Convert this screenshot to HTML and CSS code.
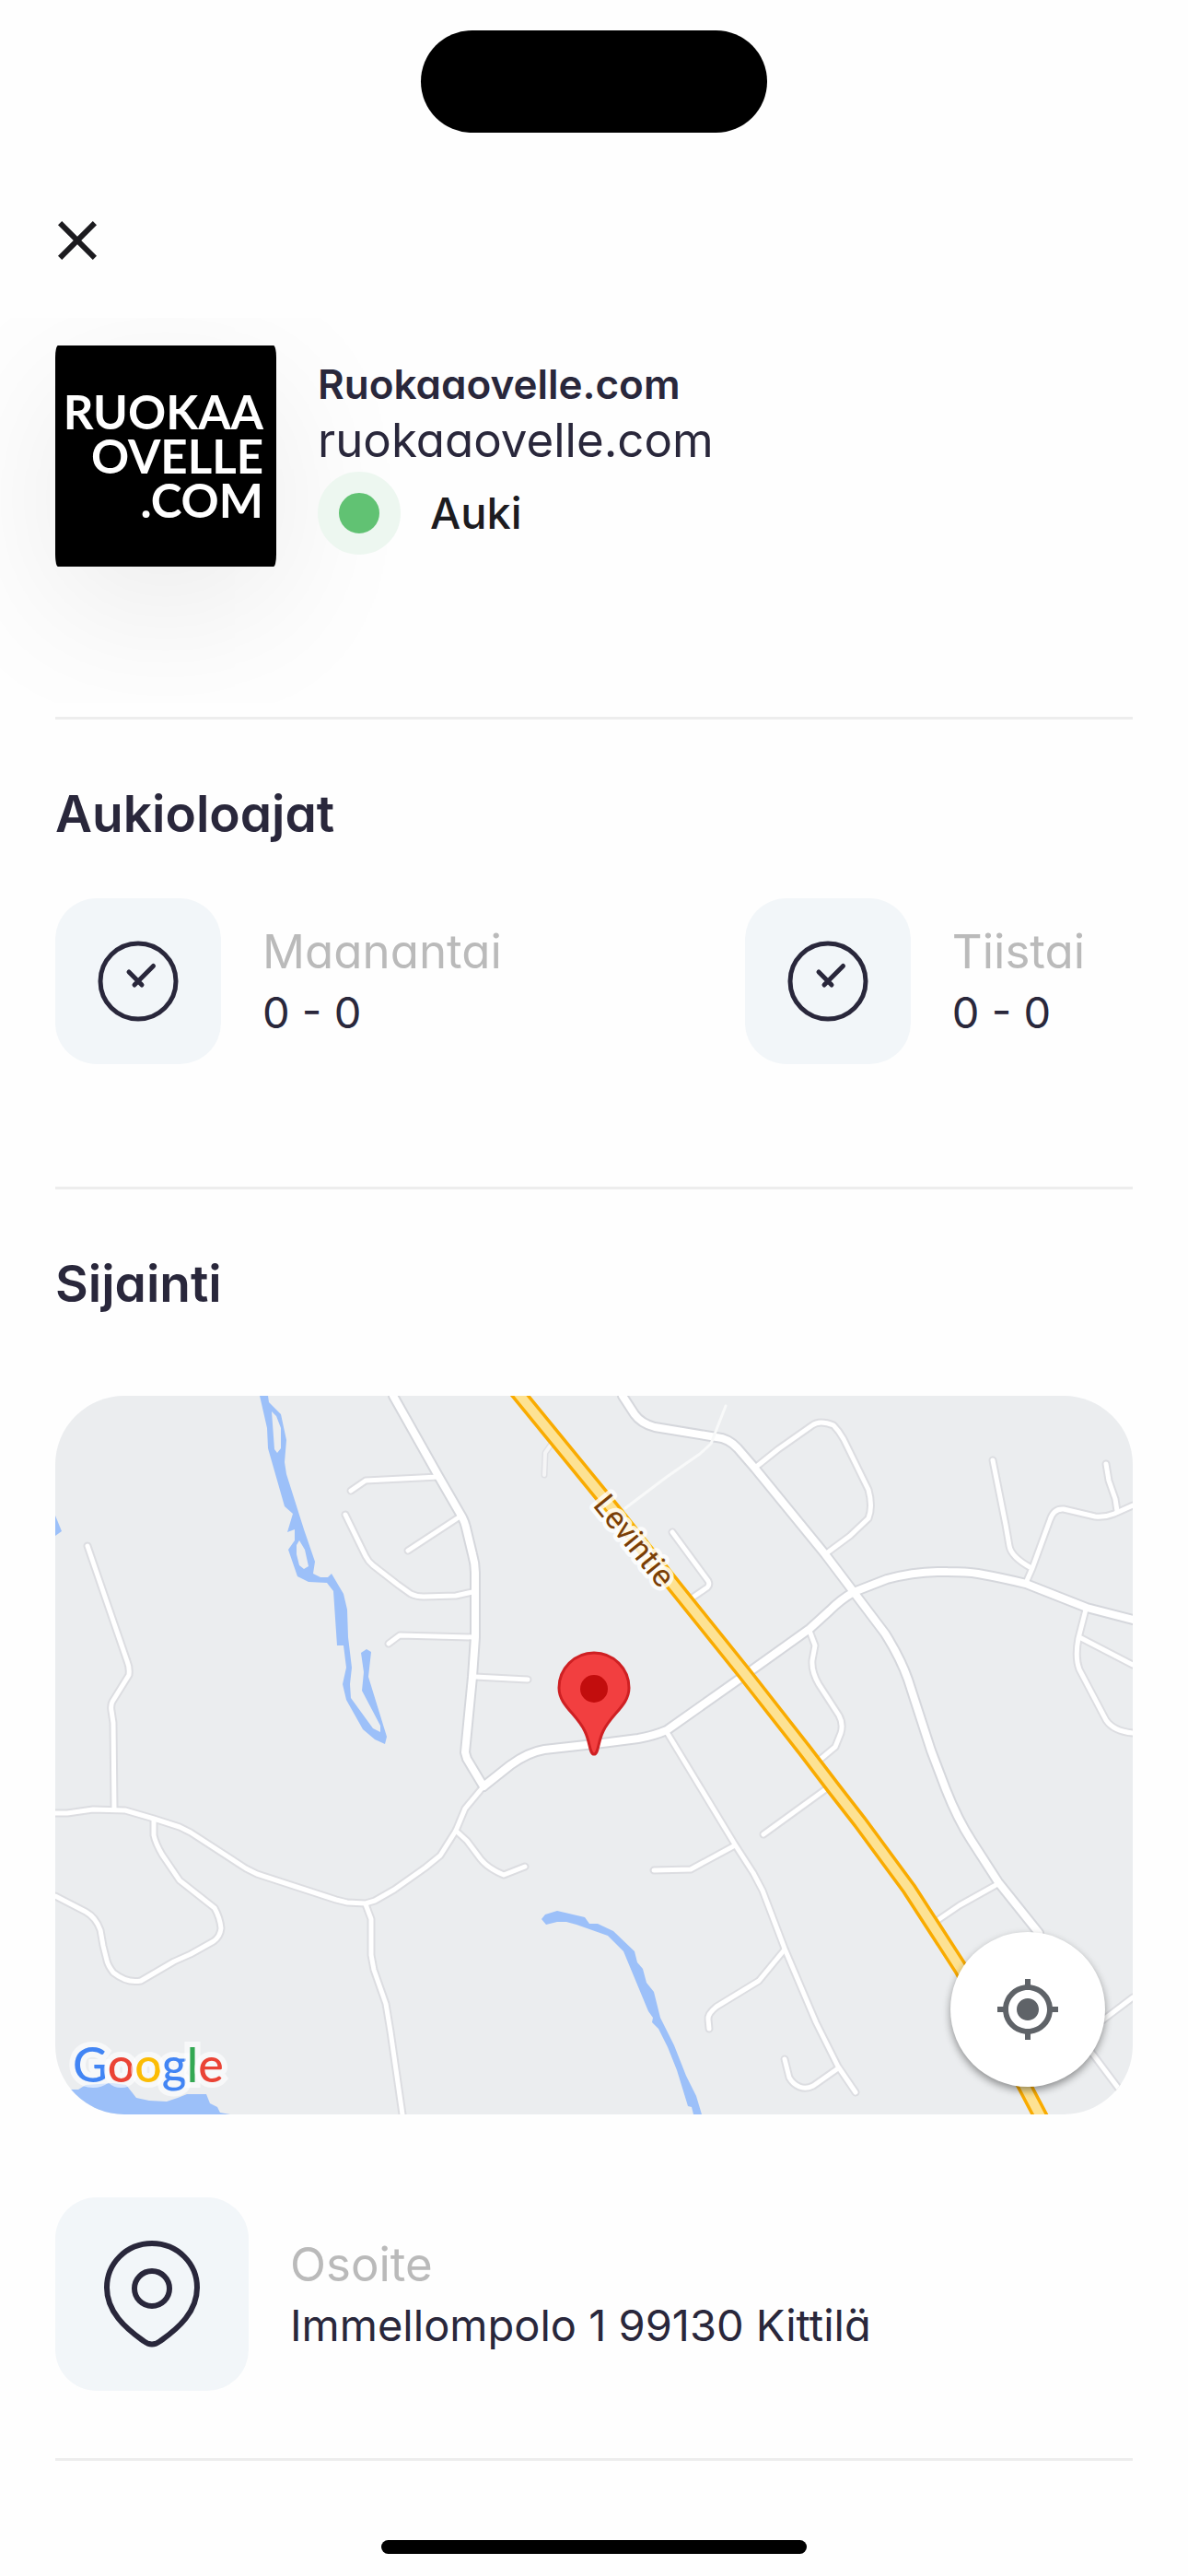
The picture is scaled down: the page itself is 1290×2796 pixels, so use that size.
FILE: index.html
```html
<!DOCTYPE html>
<html lang="fi">
<head>
    <meta charset="UTF-8">
    <meta name="viewport" content="width=device-width, initial-scale=1.0">
    <title>Ruokaaovelle.com</title>
    <link rel="stylesheet" href="styles.css">
</head>
<body>
    <div class="status-bar">
        <div class="island"></div>
    </div>
    <header class="app-bar">
        <button class="close-btn" type="button" aria-label="Sulje">
            <svg viewBox="0 0 24 24"><path d="M19 6.41L17.59 5 12 10.59 6.41 5 5 6.41 10.59 12 5 17.59 6.41 19 12 13.41 17.59 19 19 17.59 13.41 12z"/></svg>
        </button>
    </header>

    <main>
        <section class="restaurant">
            <div class="logo">
                <p>RUOKAA<br>OVELLE<br>.COM</p>
            </div>
            <div class="restaurant-info">
                <h1>Ruokaaovelle.com</h1>
                <p class="website">ruokaaovelle.com</p>
                <div class="status">
                    <span class="status-dot"></span>
                    <span>Auki</span>
                </div>
            </div>
        </section>

        <section class="hours">
            <h2>Aukioloajat</h2>
            <div class="hours-list">
                <div class="info-item">
                    <div class="icon-box">
                        <svg viewBox="0 0 180 180">
                            <circle cx="90" cy="90" r="41"/>
                            <path d="M106.500 73.500L86 94M80 80l14 14"/>
                        </svg>
                    </div>
                    <div class="info-text">
                        <span class="label">Maanantai</span>
                        <span class="value">0 - 0</span>
                    </div>
                </div>
                <div class="info-item">
                    <div class="icon-box">
                        <svg viewBox="0 0 180 180">
                            <circle cx="90" cy="90" r="41"/>
                            <path d="M106.500 73.500L86 94M80 80l14 14"/>
                        </svg>
                    </div>
                    <div class="info-text">
                        <span class="label">Tiistai</span>
                        <span class="value">0 - 0</span>
                    </div>
                </div>
            </div>
        </section>

        <section class="location">
            <h2>Sijainti</h2>
            <div class="map">
                <svg class="map-canvas" viewBox="0 0 1170 780">
                    <defs>
                        <g id="minor-roads">
                            <path d="M416 88L337 92L321 103"/>
                            <path d="M438 132L383 168"/>
                            <path d="M453 213L435 217L400 218Q392 218 386 215L372 205L345 184Q340 180 337 174L315 129"/>
                            <path d="M454 262L374 260L362 269"/>
                            <path d="M456 305L513 308"/>
                            <path d="M35 163L78 288Q81 295 80 303L62 332Q60 336 61 342L63 355L64 448"/>
                            <path d="M0 453H13L41 449L76 450L107 459L135 468L147 474L207 513L219 519L305 547L317 550L337 551L347 548L368 536L402 512L418 499L435 472L445 448L465 424"/>
                            <path d="M435 472L447 483L462 503Q470 513 487 520L510 511"/>
                            <path d="M107 460V477Q109 486 116 498L135 526L173 556Q179 567 180 578Q179 587 172 592L147 606L129 614L93 635Q78 638 63 626Q57 618 56 613L52 597L49 580Q44 566 33 560L0 543"/>
                            <path d="M337 552L343 568V607L346 623L359 660L364 690L377 780"/>
                            <path d="M760 78L785 58L822 32Q830 26 845 32Q851 38 856 47L883 102Q888 120 883 133L863 152L836 172"/>
                            <path d="M670 148L709 201Q711 205 708 208L689 221"/>
                            <path d="M819 255L825 271L822 287Q821 299 829 313L851 347Q856 356 853 366L847 381L829 396"/>
                            <path d="M1018 70L1032 140L1036 163Q1038 175 1060 187"/>
                            <path d="M1054 203L1061 187L1080 135Q1084 122 1095 123L1129 131Q1140 132 1150 128L1170 119"/>
                            <path d="M1141 74L1144 92L1151 112L1153 125"/>
                            <path d="M1119 232L1111 263Q1107 284 1112 297L1141 352Q1149 364 1170 366"/>
                            <path d="M1112 262L1170 292"/>
                            <path d="M664 365L738 487L758 518L768 537L792 600L826 680L850 728L869 756"/>
                            <path d="M738 488L690 514L650 515"/>
                            <path d="M792 601L764 635L718 663Q708 671 709 677L710 687"/>
                            <path d="M792 720L797 740Q801 747 808 750Q815 753 823 749L850 730"/>
                            <path d="M838 426L769 476"/>
                            <path d="M1025 529L982 553L957 570"/>
                            <path d="M1170 653L1141 675L1090 715"/>
                            <path d="M1100 680L1127 715L1154 751"/>
                        </g>
                        <g id="main-roads">
                            <path d="M367 0L416 87L442 132Q445 138 446 143L453 172Q456 182 456 192V262L453 305L445 387L447 394L465 424"/>
                            <path d="M465 424L494 401Q513 387 531 384L594 377L633 372Q650 369 664 363L749 303L819 253L841 233Q853 221 867 213L903 199Q936 190 969 191Q990 191 1002 193Q1030 198 1054 204L1120 230L1170 243"/>
                            <path d="M616 0L629 20Q636 30 651 34L718 45Q731 46 741 57L760 79L836 172L867 213L901 258Q918 285 926 308L951 385L967 427Q980 460 995 483L1024 528L1068 583"/>
                        </g>
                        <path id="highway" d="M500 -6L594 109L749 302L814 385L846 427L874 463L927 535L951 572L984 623L1053 750L1074 790"/>
                    </defs>

                    <rect width="1170" height="780" fill="#ebedef"/>

                    <!-- water -->
                    <g fill="#9cc0f9">
                        <path fill-rule="evenodd" d="M222 0L230 35L231 57L249 120L258 128L252 148L260 145V157L253 167L263 196L275 202L295 203L302 212L306 271H313L316 295L312 313L316 330L334 362L347 373L358 378L360 370L340 305L343 278L338 275L332 279L335 300L333 320L353 358V365L345 361L321 328L320 313L322 295L318 262L317 232L313 215L300 193L296 197H288L280 193L282 180L270 145L251 85L249 72L251 48L245 20L232 7L231 0ZM235 17L240 22L245 35V57L241 62L238 58ZM265 157L271 167L275 185L270 188L265 184L262 172V162Z"/>
                        <path d="M0 130L7 147L0 152Z"/>
                        <path d="M528 568L532 563L545 559L575 566L580 573H589L606 581L629 603L632 615L638 622L642 637L650 647L657 675L672 705L685 738L696 760L702 780H693L691 772L687 771L675 732L665 707L655 687L648 680L649 675L644 668L617 603L600 586L566 574L555 571L545 571L533 574Z"/>
                        <path d="M0 753H25L33 748L62 746L77 748L88 762L102 765L121 766L133 762L143 758H164L168 768L176 772L179 778L190 780H0Z"/>
                    </g>

                    <!-- casings first, then fills, so junctions stay open -->
                    <g class="road">
                        <use href="#minor-roads" stroke="#dcdde1" stroke-width="9"/>
                        <use href="#main-roads" stroke="#d5d7dc" stroke-width="12"/>
                        <use href="#minor-roads" stroke="#fff" stroke-width="5"/>
                        <use href="#main-roads" stroke="#fff" stroke-width="8"/>
                        <path d="M728 11L712 52L700 63L664 88L619 122" stroke="#f8f9f9" stroke-width="3"/>
                        <path d="M539 52L532 62L531 86" stroke="#dfe0e4" stroke-width="7"/>
                        <path d="M539 52L532 62L531 86" stroke="#f5f5f6" stroke-width="4"/>
                        <use href="#highway" stroke="#f9ab00" stroke-width="17"/>
                        <use href="#highway" stroke="#fde293" stroke-width="10"/>
                    </g>

                    <text class="road-name" transform="translate(583 119) rotate(51)">Levintie</text>

                    <path d="M585 389C580 389 581 376 575 364C566 345 547 336 547 317A38 38 0 0 1 623 317C623 336 604 345 595 364C589 376 590 389 585 389Z" fill="#f23f40" stroke="#cf2023" stroke-width="3"/>
                    <circle cx="585" cy="318" r="15" fill="#c20d0d"/>

                    <text class="map-brand" x="19" y="745"><tspan fill="#4285f4">G</tspan><tspan fill="#ea4335">o</tspan><tspan fill="#fbbc04">o</tspan><tspan fill="#4285f4">g</tspan><tspan fill="#34a853">l</tspan><tspan fill="#ea4335">e</tspan></text>
                </svg>
                <button class="locate-btn" type="button" aria-label="Oma sijainti">
                    <svg viewBox="0 0 24 24"><path d="M12 8c-2.210 0-4 1.790-4 4s1.790 4 4 4 4-1.790 4-4-1.790-4-4-4zm8.940 3A8.994 8.994 0 0 0 13 3.060V1h-2v2.060A8.994 8.994 0 0 0 3.060 11H1v2h2.060A8.994 8.994 0 0 0 11 20.940V23h2v-2.060A8.994 8.994 0 0 0 20.940 13H23v-2h-2.060zM12 19c-3.870 0-7-3.130-7-7s3.130-7 7-7 7 3.130 7 7-3.130 7-7 7z"/></svg>
                </button>
            </div>

            <div class="info-item">
                <div class="icon-box icon-box-large">
                    <svg viewBox="0 0 210 210">
                        <path d="M105 50C77 50 56 72 56 98C56 124 76 142 96 156Q105 163 114 156C134 142 154 124 154 98C154 72 133 50 105 50Z"/>
                        <circle cx="105" cy="99" r="19"/>
                    </svg>
                </div>
                <div class="info-text">
                    <span class="label">Osoite</span>
                    <span class="value">Immellompolo 1 99130 Kittilä</span>
                </div>
            </div>
        </section>
    </main>

    <div class="home-indicator"></div>
</body>
</html>
```
FILE: styles.css
```css
:root {
    --text-color: #29273b;
    --muted-color: #bababa;
    --background-color: #fefefe;
    --box-color: #f2f6f9;
    --line-color: #ededed;
    --side: 60px;
}
* {
    box-sizing: border-box;
}
body {
    display: flex;
    flex-direction: column;
    min-height: 100vh;
    margin: 0;
    font-family: Inter, "Noto Sans", sans-serif;
    font-feature-settings: "cv11";
    color: var(--text-color);
    background-color: var(--background-color);
}
h1, h2, p {
    margin: 0;
}
button {
    display: flex;
    align-items: center;
    justify-content: center;
    padding: 0;
    border: none;
    background: none;
    cursor: pointer;
}
button svg {
    width: 72px;
    height: 72px;
}

/* top of the screen */
.status-bar {
    display: flex;
    justify-content: center;
    height: 177px;
    padding-top: 33px;
}
.island {
    width: 376px;
    height: 111px;
    border-radius: 56px;
    background-color: #000;
}
.app-bar {
    display: flex;
    align-items: center;
    height: 168px;
    padding: 0 48px;
}
.close-btn svg {
    fill: #1c1b1f;
}

/* the logo shadow is cut at the app bar */
main {
    overflow: hidden;
    padding: 0 var(--side);
}
section {
    border-bottom: 3px solid var(--line-color);
}
h2 {
    padding-top: 63px;
    font-size: 55px;
    font-weight: 600;
    line-height: 78px;
}

.restaurant {
    display: flex;
    align-items: center;
    gap: 45px;
    padding: 30px 0 163px;
}
.logo {
    display: flex;
    align-items: center;
    justify-content: flex-end;
    flex: none;
    width: 240px;
    height: 240px;
    padding-right: 14px;
    border-radius: 3px / 13px;
    background-color: #000;
    box-shadow: 0 45px 160px rgba(0, 0, 0, 0.08);
    color: #fff;
    font-family: Lato, sans-serif;
    font-size: 51px;
    font-weight: 700;
    line-height: 48px;
    text-align: right;
}
.restaurant-info h1 {
    font-size: 44px;
    font-weight: 600;
    line-height: 57px;
}
.website {
    font-size: 51px;
    line-height: 63px;
}
.status {
    display: flex;
    align-items: center;
    gap: 32px;
    margin-top: 3px;
    color: #1c1b1f;
    font-size: 47px;
    font-weight: 500;
}
.status-dot {
    width: 90px;
    height: 90px;
    border: 23px solid #edf7f0;
    border-radius: 50%;
    background-color: #61c273;
}

.hours {
    padding-bottom: 133px;
}
.hours-list {
    display: grid;
    grid-template-columns: 16fr 9fr;
    margin-top: 53px;
}
.info-item {
    display: flex;
    align-items: center;
    gap: 45px;
}
.icon-box {
    flex: none;
    width: 180px;
    height: 180px;
    border-radius: 45px;
    background-color: var(--box-color);
}
.icon-box-large {
    width: 210px;
    height: 210px;
}
.icon-box svg {
    display: block;
    fill: none;
    stroke: var(--text-color);
    stroke-width: 5px;
    stroke-linecap: round;
}
.icon-box-large svg {
    stroke-width: 6px;
}
.info-text {
    display: flex;
    flex-direction: column;
    gap: 3px;
}
.label {
    color: var(--muted-color);
    font-size: 51px;
    line-height: 63px;
}
.value {
    font-size: 47px;
    line-height: 63px;
}

.location {
    padding-bottom: 73px;
}
.map {
    position: relative;
    overflow: hidden;
    margin: 83px 0 90px;
    border-radius: 75px;
}
.map-canvas {
    display: block;
    width: 100%;
}
.road {
    fill: none;
    stroke-linecap: round;
    stroke-linejoin: round;
}
.road-name {
    fill: #7a3e06;
    stroke: rgba(255, 255, 255, 0.8);
    stroke-width: 9px;
    stroke-linejoin: round;
    paint-order: stroke;
    font-family: Roboto, sans-serif;
    font-size: 34px;
}
.map-brand {
    stroke: rgba(255, 255, 255, 0.6);
    stroke-width: 12px;
    paint-order: stroke;
    font-family: Lato, sans-serif;
    font-size: 52px;
    font-weight: 500;
}
.locate-btn {
    position: absolute;
    right: 30px;
    bottom: 30px;
    width: 168px;
    height: 168px;
    border-radius: 50%;
    background-color: #fff;
    box-shadow: 0 4px 9px rgba(0, 0, 0, 0.4);
}
.locate-btn svg {
    fill: #5f6368;
}

.home-indicator {
    width: 462px;
    height: 15px;
    margin: auto auto 24px;
    border-radius: 8px;
    background-color: #000;
}
```
